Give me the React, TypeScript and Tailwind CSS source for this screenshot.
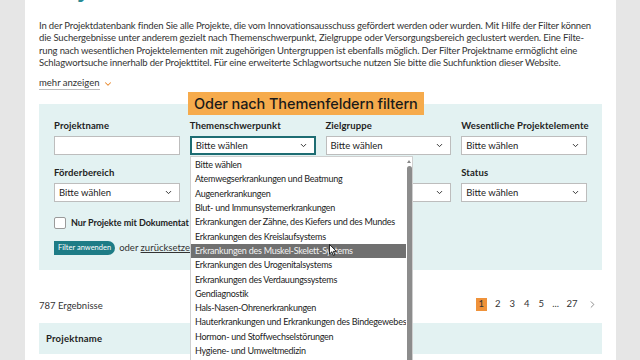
import { ChevronDown, ChevronRight } from "lucide-react";

const options = [
  "Bitte wählen",
  "Atemwegserkrankungen und Beatmung",
  "Augenerkrankungen",
  "Blut- und Immunsystemerkrankungen",
  "Erkrankungen der Zähne, des Kiefers und des Mundes",
  "Erkrankungen des Kreislaufsystems",
  "Erkrankungen des Muskel-Skelett-Systems",
  "Erkrankungen des Urogenitalsystems",
  "Erkrankungen des Verdauungssystems",
  "Gendiagnostik",
  "Hals-Nasen-Ohrenerkrankungen",
  "Hauterkrankungen und Erkrankungen des Bindegewebes",
  "Hormon- und Stoffwechselstörungen",
  "Hygiene- und Umweltmedizin",
  "Infektionskrankheiten",
];

function Select({ focused = false, text = "Bitte wählen" }: { focused?: boolean; text?: string }) {
  return (
    <div
      className={`h-[19px] bg-white flex items-center justify-between pl-[4px] pr-[6px] text-[9.5px] text-[#222] ${
        focused ? "border-2 border-[#1e6d73]" : "border border-[#bdbdbd]"
      }`}
    >
      <span>{text}</span>
      <ChevronDown size={9} strokeWidth={2.6} className="text-[#333]" />
    </div>
  );
}

function Field({ label, children }: { label: string; children: React.ReactNode }) {
  return (
    <div className="flex flex-col gap-[4px]">
      <div className="h-[12px] text-[9.5px] leading-[12px] font-bold text-[#222] tracking-[0.1px] whitespace-nowrap">
        {label}
      </div>
      {children}
    </div>
  );
}

export default function App() {
  return (
    <div className="w-[640px] h-[360px] overflow-hidden bg-[#e6e6e6] flex font-['Lato','Liberation_Sans',sans-serif]">
      <div className="relative ml-[25px] w-[591px] h-full bg-white px-[14px]">
        <h1 className="-mt-[27px] text-[26px] leading-[30px] font-bold text-[#2a8a93]">Projekte</h1>

        <p className="mt-[17px] text-[9.5px] leading-[12.3px] text-[#333] tracking-[-0.15px] whitespace-nowrap">
          In der Projektdatenbank finden Sie alle Projekte, die vom Innovationsausschuss gefördert werden oder wurden. Mit Hilfe der Filter können
          <br />
          die Suchergebnisse unter anderem gezielt nach Themenschwerpunkt, Zielgruppe oder Versorgungsbereich geclustert werden. Eine Filte-
          <br />
          rung nach wesentlichen Projektelementen mit zugehörigen Untergruppen ist ebenfalls möglich. Der Filter Projektname ermöglicht eine
          <br />
          Schlagwortsuche innerhalb der Projekttitel. Für eine erweiterte Schlagwortsuche nutzen Sie bitte die Suchfunktion dieser Website.
        </p>

        <div className="mt-[8px] flex items-center gap-[3px] text-[9.5px] leading-[12px] text-[#333]">
          <span className="border-b border-[#bbb]">mehr anzeigen</span>
          <ChevronDown size={10} strokeWidth={2.5} className="text-[#e8892e]" />
        </div>

        <div className="relative mt-[14px] bg-[#e3f2f2] px-[15px] pt-[16px] pb-[15px]">
          <div className="grid grid-cols-4 gap-x-[10px] gap-y-[12px]">
            <Field label="Projektname">
              <div className="h-[19px] bg-white border border-[#bdbdbd]" />
            </Field>
            <Field label="Themenschwerpunkt">
              <Select focused />
            </Field>
            <Field label="Zielgruppe">
              <Select />
            </Field>
            <Field label="Wesentliche Projektelemente">
              <Select />
            </Field>
            <Field label="Förderbereich">
              <Select />
            </Field>
            <Field label="">
              <Select text="" />
            </Field>
            <Field label="">
              <Select text="" />
            </Field>
            <Field label="Status">
              <Select />
            </Field>
          </div>

          <div className="mt-[14px] flex items-center gap-[5px]">
            <div className="w-[12px] h-[12px] bg-white border border-[#9a9a9a] rounded-[2px]" />
            <span className="text-[9px] font-bold text-[#222] tracking-[-0.05px] whitespace-nowrap">
              Nur Projekte mit Dokumentat
            </span>
          </div>

          <div className="mt-[11px] flex items-center gap-[4px] text-[9.5px] text-[#333]">
            <span className="h-[14px] px-[4px] flex items-center rounded-r-full rounded-l-[3px] bg-[#1e7c86] text-white text-[7.5px]">
              Filter anwenden
            </span>
            <span>
              oder <span className="underline">zurücksetzen</span>
            </span>
          </div>

          {/* open dropdown of Themenschwerpunkt */}
          <div className="absolute left-[151px] top-[52px] w-[223px] h-[260px] bg-white border border-[#cfcfcf] flex overflow-hidden">
            <div className="flex-1 min-w-0 pt-[1px]">
              {options.map((o) => (
                <div
                  key={o}
                  className={`h-[14.3px] leading-[14.3px] pl-[4px] text-[9px] tracking-[-0.25px] whitespace-nowrap overflow-hidden ${
                    o === "Erkrankungen des Muskel-Skelett-Systems"
                      ? "bg-[#707070] text-[#f2f2f2]"
                      : "text-[#222]"
                  }`}
                >
                  {o}
                </div>
              ))}
            </div>
            <div className="w-[6px] flex flex-col items-center">
              <div className="mt-[3px] w-0 h-0 border-l-[2px] border-r-[2px] border-b-[3px] border-l-transparent border-r-transparent border-b-[#888]" />
              <div className="mt-[3px] w-[5px] flex-1 rounded-full bg-[#8c8c8c]" />
            </div>
          </div>
        </div>

        <div className="mt-[26px] flex items-center justify-between text-[9.5px] text-[#333]">
          <span className="pt-[3px]">787 Ergebnisse</span>
          <div className="flex items-center gap-[7.5px] pr-[4px]">
            <span className="w-[11px] h-[13px] flex items-center justify-center bg-[#ef923a] text-[#333]">1</span>
            <span className="w-[7px] text-center">2</span>
            <span className="w-[7px] text-center">3</span>
            <span className="w-[7px] text-center">4</span>
            <span className="w-[7px] text-center">5</span>
            <span>...</span>
            <span>27</span>
            <ChevronRight size={11} strokeWidth={1.8} className="text-[#777] ml-[2px]" />
          </div>
        </div>

        <div className="mt-[10px] h-[31px] bg-[#e3f2f2] flex items-center px-[7px] text-[9.5px] font-bold text-[#222] tracking-[0.2px]">
          Projektname
        </div>

        {/* mouse pointer */}
        <svg className="absolute left-[304px] top-[244px]" width="8" height="12" viewBox="0 0 8 12">
          <path d="M0.5 0.5 L0.5 10 L2.8 7.8 L4.4 11.4 L5.8 10.8 L4.3 7.3 L7.4 7.3 Z" fill="#fff" stroke="#111" strokeWidth="0.9" />
        </svg>

        {/* banner */}
        <div className="absolute left-[163px] top-[92px] h-[23px] px-[6px] flex items-center bg-[#f6ab4c] text-[14.5px] font-medium text-[#1a1a1a] font-['Inter',sans-serif] tracking-[-0.1px]">
          Oder nach Themenfeldern filtern
        </div>
      </div>
    </div>
  );
}
